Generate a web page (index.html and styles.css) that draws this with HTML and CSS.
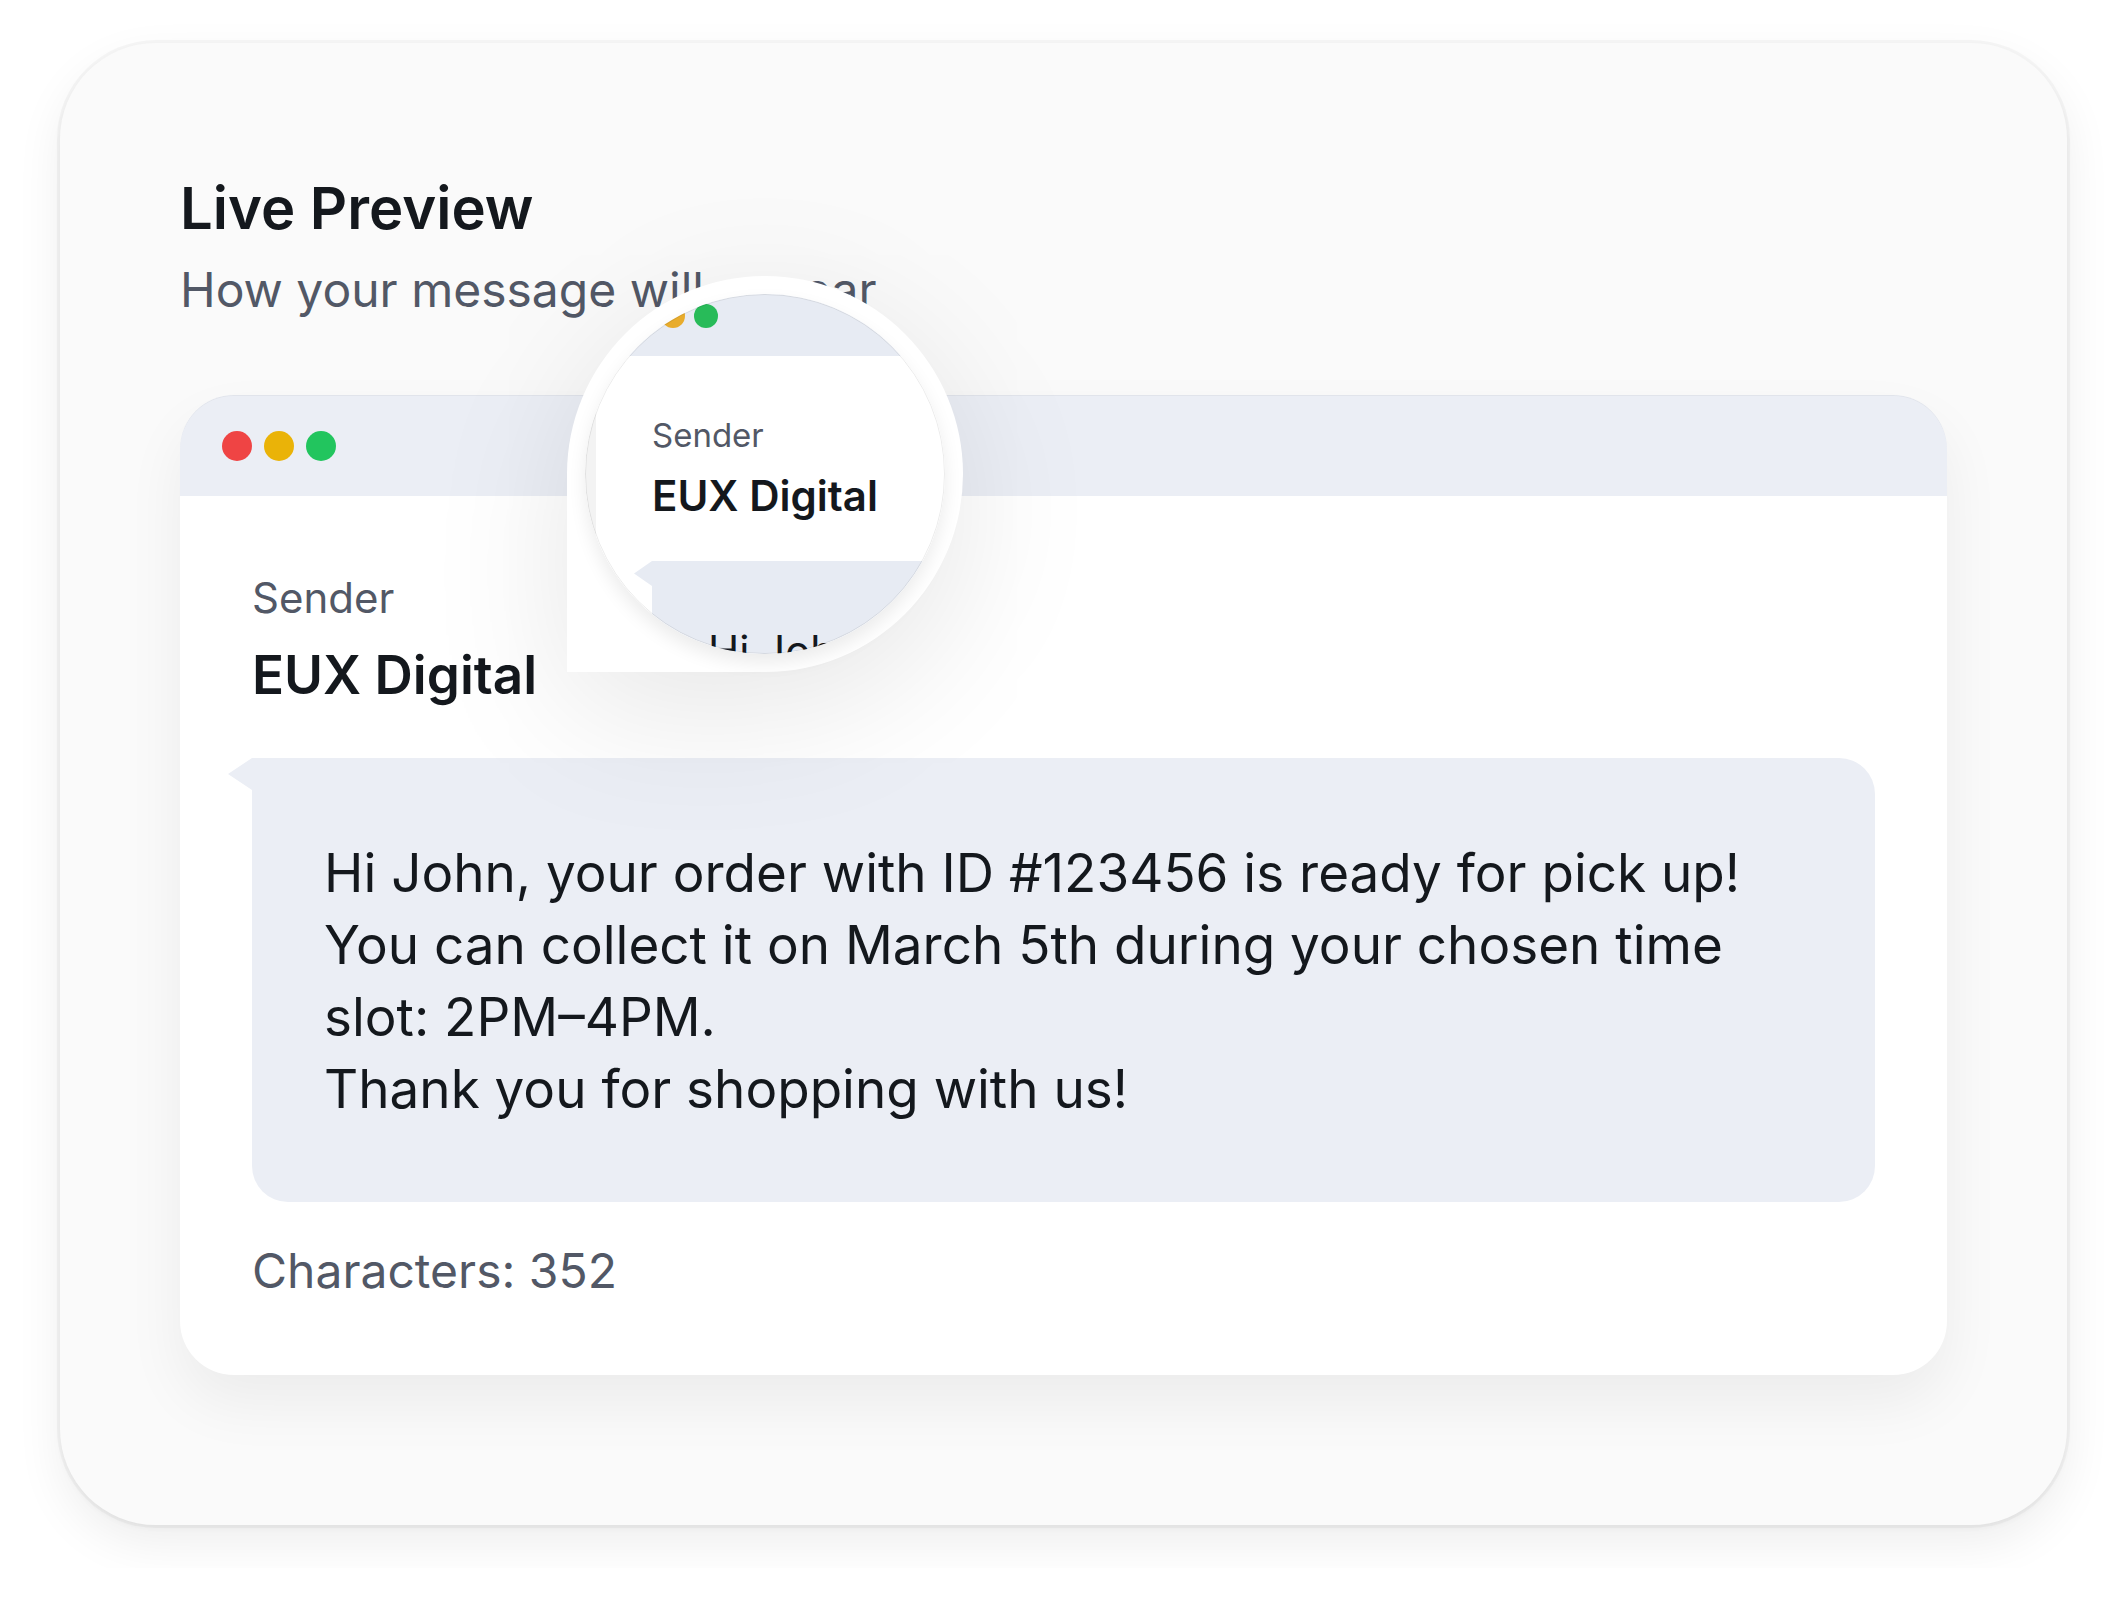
FILE: index.html
```html
<!DOCTYPE html>
<html lang="en">
<head>
  <meta charset="UTF-8" />
  <meta name="viewport" content="width=device-width, initial-scale=1.0"/>
  <title>Live Preview</title>
  <link rel="stylesheet" href="styles.css">
</head>
<body>
  <main class="panel">
    <header class="panel-header">
      <h1>Live Preview</h1>
      <p>How your message will appear</p>
    </header>

    <section class="window">
      <div class="window-bar">
        <span class="dot red"></span>
        <span class="dot yellow"></span>
        <span class="dot green"></span>
      </div>
      <div class="window-body">
        <p class="sender-label">Sender</p>
        <h2 class="sender-name">EUX Digital</h2>
        <div class="bubble">
          <p>Hi John, your order with ID #123456 is ready for pick up! You can collect it on March 5th during your chosen time slot: 2PM–4PM.<br>Thank you for shopping with us!</p>
        </div>
        <p class="characters">Characters: 352</p>
      </div>
    </section>

    <!-- magnifier -->
    <div class="lens" aria-hidden="true">
      <div class="lens-glass">
        <div class="window mini">
          <div class="window-bar">
            <span class="dot red"></span>
            <span class="dot yellow"></span>
            <span class="dot green"></span>
          </div>
          <div class="window-body">
            <p class="sender-label">Sender</p>
            <p class="sender-name">EUX Digital</p>
            <div class="bubble">
              <p>Hi John,</p>
            </div>
          </div>
        </div>
      </div>
    </div>
  </main>
</body>
</html>
```

FILE: styles.css
```css
:root {
  --ink: #14181d;
  --muted: #525866;
  --tint: #ebeef5;
  --panel: #fafafa;
}
* {
  box-sizing: border-box;
}
body {
  margin: 0;
  padding: 43px 60px;
  font-family: Inter, "Liberation Sans", sans-serif;
  background: #fff;
  color: var(--ink);
}
h1, h2, p {
  margin: 0;
}
.panel {
  position: relative;
  padding: 129px 120px 150px;
  background: var(--panel);
  border-radius: 96px;
  box-shadow: 0 0 0 3px rgba(0,0,0,0.03), 0 3px 6px rgba(0,0,0,0.04), 0 18px 48px rgba(0,0,0,0.07);
}
.panel-header {
  display: flex;
  flex-direction: column;
  gap: 10px;
  margin-bottom: 69px;
}
.panel-header h1 {
  font-size: 58px;
  line-height: 72px;
  font-weight: 600;
}
.panel-header p {
  font-size: 48px;
  line-height: 72px;
  color: var(--muted);
}
.window {
  background: #fff;
  border-radius: 54px;
  box-shadow: 0 28px 60px rgba(0,0,0,0.06);
}
.window-bar {
  display: flex;
  align-items: center;
  gap: 12px;
  height: 101px;
  padding: 0 42px;
  background: var(--tint);
  border-radius: 54px 54px 0 0;
  box-shadow: inset 0 1px 0 rgba(0,0,0,0.04);
}
.dot {
  width: 30px;
  height: 30px;
  border-radius: 50%;
}
.red {
  background: #ef4444;
}
.yellow {
  background: #eab308;
}
.green {
  background: #22c55e;
}
.window-body {
  padding: 72px 72px 68px;
}
.sender-label {
  font-size: 42px;
  line-height: 60px;
  color: var(--muted);
}
.sender-name {
  margin-top: 11px;
  font-size: 53px;
  line-height: 72px;
  font-weight: 600;
}
.bubble {
  position: relative;
  margin-top: 47px;
  padding: 79px 72px 77px;
  background: var(--tint);
  border-radius: 0 36px 36px 36px;
  font-size: 53px;
  line-height: 72px;
}
.bubble::before {
  content: "";
  position: absolute;
  top: 0;
  right: 100%;
  width: 24px;
  height: 32px;
  background: var(--tint);
  clip-path: polygon(100% 0, 0 50%, 100% 100%);
}
.characters {
  margin-top: 33px;
  font-size: 48px;
  line-height: 72px;
  color: var(--muted);
}

.lens {
  position: absolute;
  top: 233px;
  left: 507px;
  padding: 18px;
  background: #fff;
  border-radius: 198px 198px 198px 0;
  box-shadow: 0 36px 144px rgba(0,0,0,0.1);
}
.lens-glass {
  --tint: #e7ebf3;
  position: relative;
  width: 360px;
  height: 360px;
  overflow: hidden;
  background: #f3f3f3;
  border-radius: 50%;
}
.lens::before {
  content: "";
  position: absolute;
  inset: 18px;
  border-radius: 50%;
  box-shadow: 0 9px 18px rgba(0,0,0,0.08);
}
.lens-glass::after {
  content: "";
  position: absolute;
  inset: 0;
  border-radius: 50%;
  border: 1px solid rgba(0,0,0,0.08);
}

/* scaled down copy of the window, shown through the lens */
.mini {
  width: 400px;
  margin: -18px 0 0 11px;
  border-radius: 0;
  box-shadow: none;
}
.mini .window-bar {
  gap: 9px;
  height: 80px;
  padding: 0 32px;
  border-radius: 0;
}
.mini .dot {
  width: 24px;
  height: 24px;
}
.mini .yellow {
  background: #e8ac2c;
}
.mini .green {
  background: #28bb59;
}
.mini .window-body {
  padding: 56px 0 0 56px;
}
.mini .sender-label {
  font-size: 33px;
  line-height: 46px;
}
.mini .sender-name {
  margin-top: 10px;
  font-size: 42px;
  line-height: 56px;
}
.mini .bubble {
  margin-top: 37px;
  padding: 62px 56px;
  font-size: 42px;
  line-height: 56px;
}
.mini .bubble::before {
  width: 18px;
  height: 25px;
}
```
